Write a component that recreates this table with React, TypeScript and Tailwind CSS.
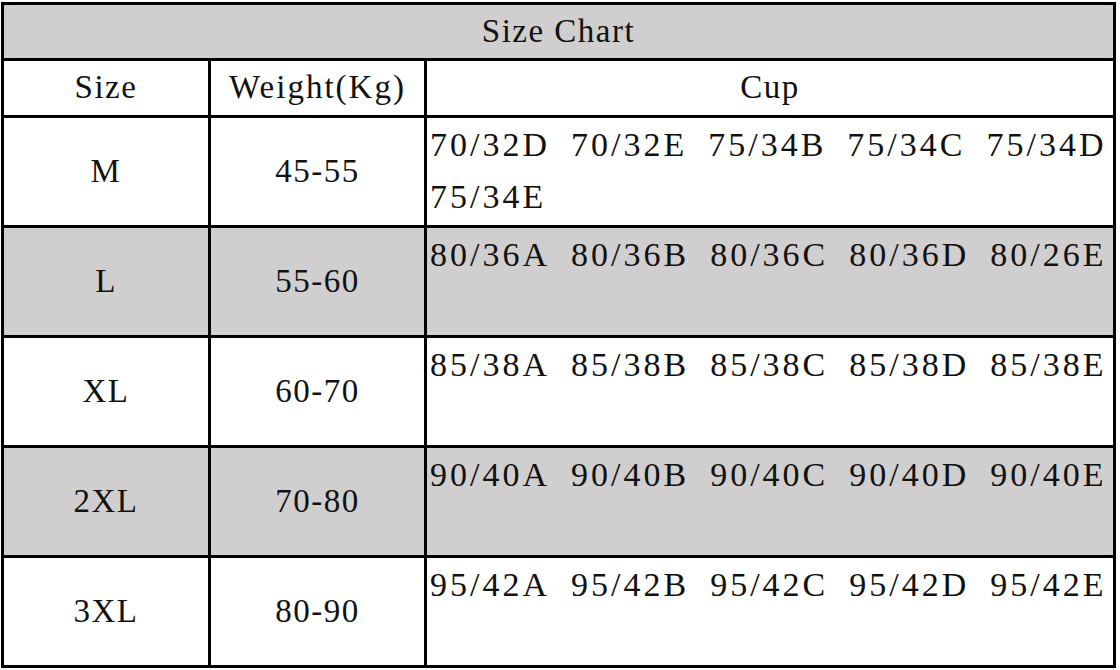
const rows = [
  { size: "M", weight: "45-55", cups: ["70/32D", "70/32E", "75/34B", "75/34C", "75/34D", "75/34E"], gray: false },
  { size: "L", weight: "55-60", cups: ["80/36A", "80/36B", "80/36C", "80/36D", "80/26E"], gray: true },
  { size: "XL", weight: "60-70", cups: ["85/38A", "85/38B", "85/38C", "85/38D", "85/38E"], gray: false },
  { size: "2XL", weight: "70-80", cups: ["90/40A", "90/40B", "90/40C", "90/40D", "90/40E"], gray: true },
  { size: "3XL", weight: "80-90", cups: ["95/42A", "95/42B", "95/42C", "95/42D", "95/42E"], gray: false },
];

export default function App() {
  return (
    <main
      className="w-[1120px] h-[670px] bg-white pt-[2px] pl-[1px] text-[#111]"
      style={{ fontFamily: '"Liberation Serif", "DejaVu Serif", serif' }}
    >
      <table className="border-collapse border-[3px] border-black w-[1115px] text-[33px] tracking-[1.5px]">
        <colgroup>
          <col className="w-[207px]" />
          <col className="w-[216px]" />
          <col />
        </colgroup>
        <tbody>
          <tr className="h-[56px] bg-[#d0cece]">
            <td colSpan={3} className="border-[3px] border-black text-center align-middle">
              Size Chart
            </td>
          </tr>
          <tr className="h-[57px]">
            <td className="border-[3px] border-black text-center">Size</td>
            <td className="border-[3px] border-black text-center tracking-[2px]">Weight(Kg)</td>
            <td className="border-[3px] border-black text-center">Cup</td>
          </tr>
          {rows.map((r) => (
            <tr key={r.size} className={r.gray ? "h-[110px] bg-[#d0cece]" : "h-[110px] bg-white"}>
              <td className="border-[3px] border-black text-center align-middle">{r.size}</td>
              <td className="border-[3px] border-black text-center align-middle">{r.weight}</td>
              <td className="border-[3px] border-black align-top pl-[3px] pt-[4px]">
                <div className="flex flex-wrap gap-x-[21px] leading-[52px] -mt-[3px] text-[34px] tracking-[3px]">
                  {r.cups.map((c) => (
                    <span key={c}>{c}</span>
                  ))}
                </div>
              </td>
            </tr>
          ))}
        </tbody>
      </table>
    </main>
  );
}
